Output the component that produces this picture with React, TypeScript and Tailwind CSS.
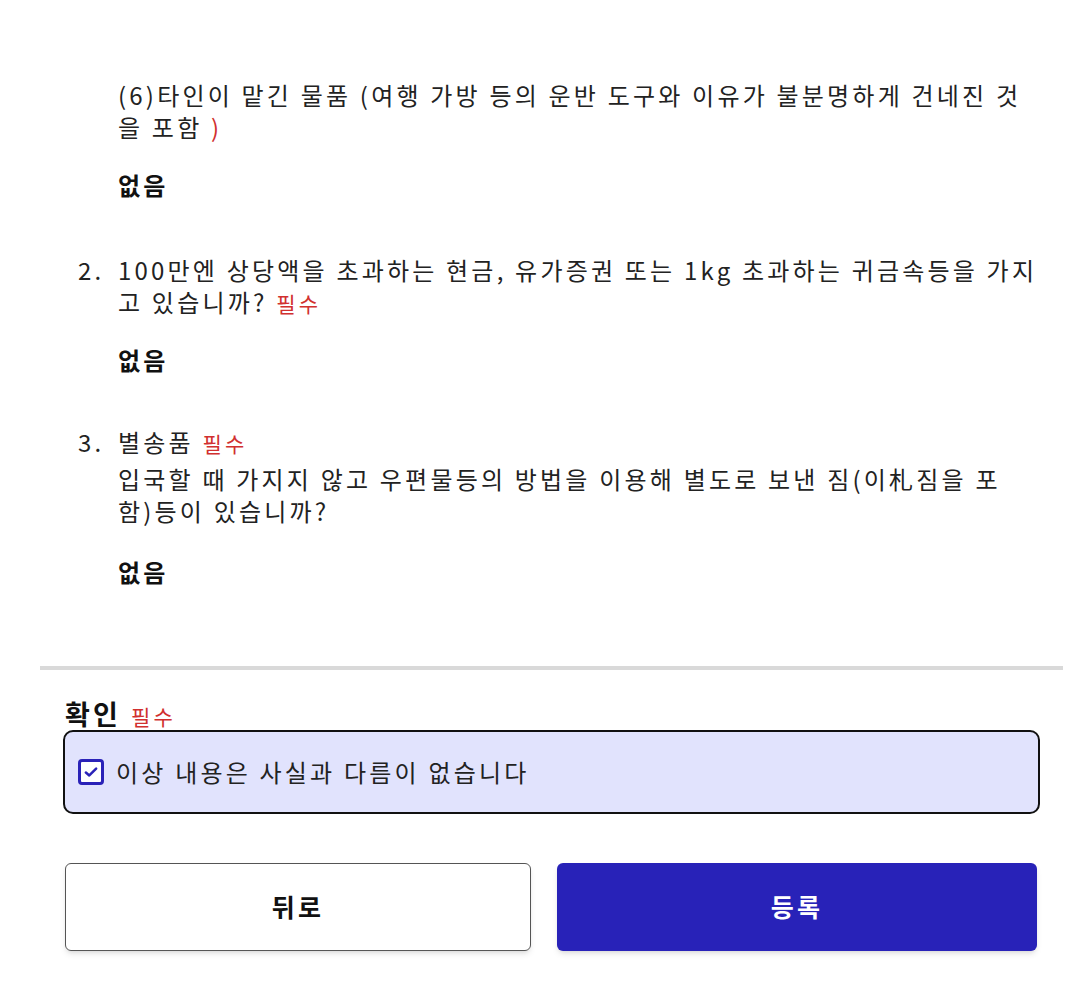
import React from "react";

const Required = ({ className = "" }: { className?: string }) => (
  <span className={`text-[#d1302f] text-[21px] leading-[1] ${className}`}>필수</span>
);

const Answer = ({ className = "mt-[26px]" }: { className?: string }) => (
  <p className={`font-bold text-[24px] leading-[32px] text-[#111] ${className}`}>없음</p>
);

function App() {
  return (
    <div className="min-h-screen bg-white text-[#222] tracking-[3.2px] font-['Noto_Sans_CJK_KR','Noto_Sans',sans-serif]">
      <div className="pt-[79px] pl-[118px] pr-[10px] text-[24px] leading-[32px]">
        <p>
          (6)타인이 맡긴 물품 (여행 가방 등의 운반 도구와 이유가 불분명하게 건네진 것<br />
          을 포함 <span className="text-[#d1302f]">)</span>
        </p>
        <Answer />
      </div>

      <ol className="pl-[78px] pr-[10px] text-[24px] leading-[32px]">
        <li className="mt-[53px] flex">
          <span className="w-[40px] shrink-0">2.</span>
          <div>
            <p>
              100만엔 상당액을 초과하는 현금, 유가증권 또는 1kg 초과하는 귀금속등을 가지<br />
              고 있습니까? <Required />
            </p>
            <Answer />
          </div>
        </li>
        <li className="mt-[50px] flex">
          <span className="w-[40px] shrink-0">3.</span>
          <div>
            <p>
              별송품 <Required />
            </p>
            <p className="mt-[5px]">
              입국할 때 가지지 않고 우편물등의 방법을 이용해 별도로 보낸 짐(이札짐을 포<br />
              함)등이 있습니까?
            </p>
            <Answer className="mt-[29px]" />
          </div>
        </li>
      </ol>

      <div className="mt-[78px] ml-[40px] w-[1023px] h-[4px] bg-[#d9d9d9]" />

      <div className="pl-[63px] pr-[30px]">
        <div className="mt-[29px] pl-[2px] flex items-baseline gap-[10px]">
          <span className="font-bold text-[27px] leading-[30px] text-[#111]">확인</span>
          <Required />
        </div>
        <label className="mt-[1px] flex items-center gap-[12px] w-[977px] h-[84px] px-[13px] rounded-[10px] border-[2.5px] border-[#111] bg-[#e1e3fd]">
          <span className="w-[26px] h-[26px] rounded-[4px] border-[3px] border-[#2a22b8] bg-white flex items-center justify-center">
            <svg width="16" height="16" viewBox="0 0 14 14" fill="none">
              <path d="M2.5 7.5 L5.5 10 L11.5 4" stroke="#2a22b8" strokeWidth="2.2" strokeLinecap="round" strokeLinejoin="round" />
            </svg>
          </span>
          <span className="text-[24px] text-[#222]">이상 내용은 사실과 다름이 없습니다</span>
        </label>
      </div>

      <div className="mt-[49px] ml-[65px] flex gap-[26px]">
        <button className="w-[466px] h-[88px] rounded-[6px] border-[1.5px] border-[#555] bg-white shadow-md text-[25px] font-bold text-[#111]">
          뒤로
        </button>
        <button className="w-[480px] h-[88px] rounded-[6px] bg-[#2822b8] shadow-md text-[25px] font-bold text-white">
          등록
        </button>
      </div>
    </div>
  );
}

export default App;
